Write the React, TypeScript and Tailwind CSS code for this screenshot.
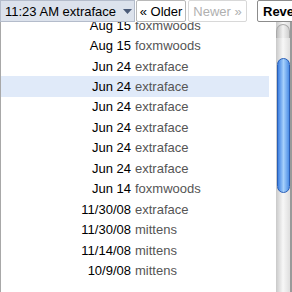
const rows: [string, string, boolean?][] = [
  ["Aug 15", "foxmwoods"],
  ["Aug 15", "foxmwoods"],
  ["Jun 24", "extraface"],
  ["Jun 24", "extraface", true],
  ["Jun 24", "extraface"],
  ["Jun 24", "extraface"],
  ["Jun 24", "extraface"],
  ["Jun 24", "extraface"],
  ["Jun 14", "foxmwoods"],
  ["11/30/08", "extraface"],
  ["11/30/08", "mittens"],
  ["11/14/08", "mittens"],
  ["10/9/08", "mittens"],
]

export default function App() {
  return (
    <div className="w-[292px] h-[292px] overflow-hidden bg-white text-[13px] leading-none" style={{ fontFamily: '"Liberation Sans", Arial, sans-serif' }}>
      {/* toolbar */}
      <div className="flex h-[22px] items-stretch bg-white">
        <div className="flex w-[135px] shrink-0 items-center border border-[#b4bccb] bg-[#dce2ec] pl-[4px] text-black">
          <span>11:23 AM extraface</span>
          <svg className="ml-[7px]" width="9" height="5" viewBox="0 0 9 5">
            <path d="M0 0h9L4.5 5z" fill="#4a5a78" />
          </svg>
        </div>
        <div className="ml-[1px] flex w-[50px] shrink-0 items-center justify-center rounded-[2px] border border-[#b8b8b8] bg-white text-black">
          « Older
        </div>
        <div className="ml-[2px] flex w-[59px] shrink-0 items-center justify-center rounded-[2px] border border-[#d8d8d8] bg-white text-[#b0b0b0]">
          Newer »
        </div>
        <div className="ml-[10px] flex w-[60px] shrink-0 items-center rounded-[2px] border border-[#8c8c8c] bg-white pl-[5px] font-bold text-black">
          Revert
        </div>
      </div>

      {/* list */}
      <div className="flex h-[270px]">
        <div className="relative w-[276px] overflow-hidden border-l border-[#a8a8a8]">
          <div className="mt-[-7px] pr-[7px]">
            {rows.map(([date, name, sel], i) => (
              <div key={i} className={`grid h-[20.45px] grid-cols-[130px_1fr] items-center ${sel ? "bg-[#e0eaf9]" : ""}`}>
                <span className="text-right text-black">{date}</span>
                <span className="pl-[4px] text-[#555]">{name}</span>
              </div>
            ))}
          </div>
        </div>
        {/* scrollbar */}
        <div className="relative w-[14px] bg-gradient-to-r from-[#c9c9c9] via-[#f7f7f7] to-[#dedede]">
          <div className="absolute left-0 right-0 top-[2px] h-[14px] rounded-t-full bg-gradient-to-r from-[#bdbdbd] via-[#f2f2f2] to-[#cfcfcf] border border-[#aaa] border-b-0" />
          <div className="absolute left-[1px] right-[0px] top-[36px] h-[135px] rounded-full border border-[#2a5fb6] bg-gradient-to-r from-[#3d7fe0] via-[#a6d0fb] to-[#4d8ee6]" />
        </div>
        <div className="w-[2px] bg-[#9a9a9a]" />
      </div>
    </div>
  )
}
